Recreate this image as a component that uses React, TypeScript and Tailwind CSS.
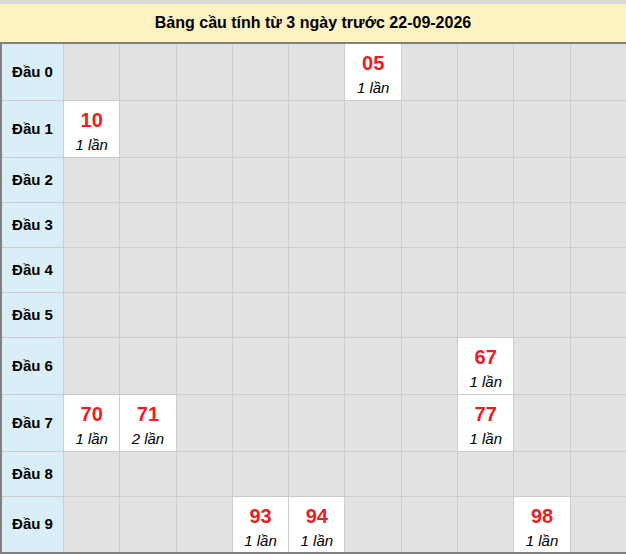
import React from "react";

type Hit = { n: string; c: string };
const rows: { label: string; h: string; hits: Record<number, Hit> }[] = [
  { label: "Đầu 0", h: "h-[56px]", hits: { 5: { n: "05", c: "1 lần" } } },
  { label: "Đầu 1", h: "h-[56px]", hits: { 0: { n: "10", c: "1 lần" } } },
  { label: "Đầu 2", h: "h-[44px]", hits: {} },
  { label: "Đầu 3", h: "h-[44px]", hits: {} },
  { label: "Đầu 4", h: "h-[44px]", hits: {} },
  { label: "Đầu 5", h: "h-[44px]", hits: {} },
  { label: "Đầu 6", h: "h-[56px]", hits: { 7: { n: "67", c: "1 lần" } } },
  {
    label: "Đầu 7",
    h: "h-[56px]",
    hits: {
      0: { n: "70", c: "1 lần" },
      1: { n: "71", c: "2 lần" },
      7: { n: "77", c: "1 lần" },
    },
  },
  { label: "Đầu 8", h: "h-[44px]", hits: {} },
  {
    label: "Đầu 9",
    h: "h-[55px]",
    hits: {
      3: { n: "93", c: "1 lần" },
      4: { n: "94", c: "1 lần" },
      8: { n: "98", c: "1 lần" },
    },
  },
];

export default function App() {
  return (
    <div className="w-[626px] h-[554px] overflow-hidden bg-white font-['Liberation_Sans',Arial,sans-serif] text-black">
      <div className="h-[4px] bg-[#d9d9d9]" />
      <div className="h-[38px] bg-[#fff2c2] flex items-center justify-center font-bold text-[16px]">
        Bảng cầu tính từ 3 ngày trước 22-09-2026
      </div>
      <div className="h-[2px] bg-[#808080]" />
      <div className="border-l-2 border-b-2 border-[#808080] bg-[#cccccc] grid grid-cols-[61px_repeat(10,minmax(0,1fr))] gap-px">
        {rows.map((r) => (
          <React.Fragment key={r.label}>
            <div
              className={`${r.h} bg-[#daeef7] flex items-center justify-center font-bold text-[15px]`}
            >
              {r.label}
            </div>
            {Array.from({ length: 10 }).map((_, i) => {
              const hit = r.hits[i];
              if (!hit)
                return <div key={i} className={`${r.h} bg-[#e1e2e4]`} />;
              return (
                <div
                  key={i}
                  className={`${r.h} bg-white flex flex-col items-center justify-start pt-[8px]`}
                >
                  <div className="text-[#ed1c24] font-bold text-[20px] leading-[22px]">
                    {hit.n}
                  </div>
                  <div className="italic text-[15px] leading-[18px] mt-[5px]">
                    {hit.c}
                  </div>
                </div>
              );
            })}
          </React.Fragment>
        ))}
      </div>
    </div>
  );
}
